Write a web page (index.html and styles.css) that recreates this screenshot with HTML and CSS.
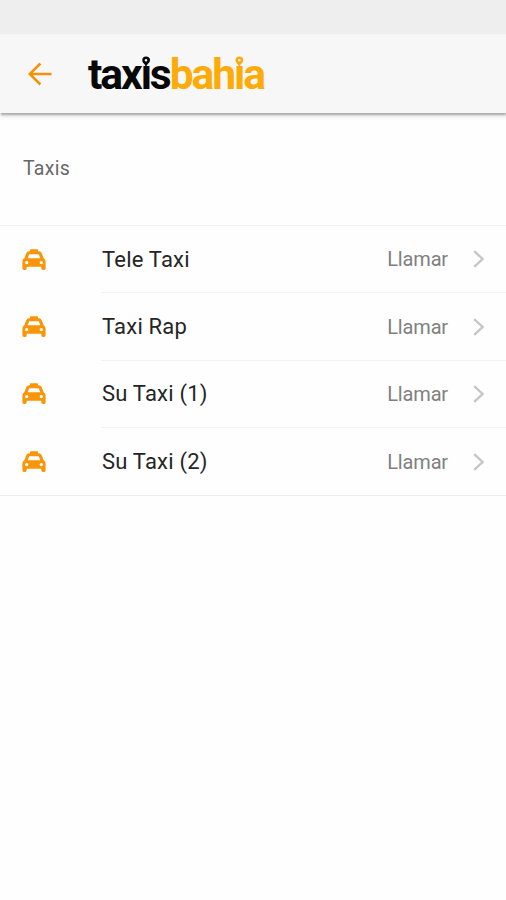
FILE: index.html
```html
<!DOCTYPE html>
<html lang="es">
<head>
<meta charset="utf-8">
<title>Taxis Bahia</title>
<link rel="stylesheet" href="styles.css">
</head>
<body>
<svg class="symbols" width="0" height="0" aria-hidden="true">
  <symbol id="taxi" viewBox="0 0 24 24">
    <path fill-rule="evenodd" d="M8 2Q8 1.3 8.7 1.3H15.3Q16 1.3 16 2V3.3H17Q18.8 3.3 19.6 5L21.7 10.2Q23.6 11.3 23.6 13.4V20.3Q23.6 21.9 22 21.9H20.9Q19.3 21.9 19.3 20.3V18.8H4.7V20.3Q4.7 21.9 3.1 21.9H2Q.4 21.9 .4 20.3V13.4Q.4 11.3 2.3 10.2L4.4 5Q5.2 3.3 7 3.3H8ZM7.2 6.3 5.7 10.3H18.3L16.8 6.3ZM4.7 12.9A1.7 1.7 0 1 0 4.7 16.3A1.7 1.7 0 1 0 4.7 12.9ZM19.3 12.9A1.7 1.7 0 1 0 19.3 16.3A1.7 1.7 0 1 0 19.3 12.9Z"/>
  </symbol>
  <symbol id="chevron" viewBox="0 0 12 18"><path d="M1.2 1.2 9.6 9 1.2 16.8"/></symbol>
</svg>
<div class="statusbar"></div>
<header class="toolbar">
  <svg class="back" viewBox="0 0 24 24"><path d="M23.5 12H2M12.4 1.5 1.8 12 12.4 22.5"/></svg>
  <svg class="logo" viewBox="0 0 180 42">
    <text x="0" y="36" textLength="178" lengthAdjust="spacing">taxis<tspan class="accent">bahia</tspan></text>
    <g class="pin"><path d="M54.8 8 58 14 61.2 8Z"/><circle cx="58" cy="7.2" r="2.5"/></g>
    <g class="pin accent"><path d="M148.1 8 151.3 14 154.5 8Z"/><circle cx="151.3" cy="7.2" r="2.5"/></g>
  </svg>
</header>
<main>
  <h1 class="heading">Taxis</h1>
  <ul class="list">
    <li class="item"><svg class="taxi"><use href="#taxi"/></svg><div class="row"><span class="name">Tele Taxi</span><span class="call">Llamar</span><svg class="chevron"><use href="#chevron"/></svg></div></li>
    <li class="item"><svg class="taxi"><use href="#taxi"/></svg><div class="row"><span class="name">Taxi Rap</span><span class="call">Llamar</span><svg class="chevron"><use href="#chevron"/></svg></div></li>
    <li class="item"><svg class="taxi"><use href="#taxi"/></svg><div class="row"><span class="name">Su Taxi (1)</span><span class="call">Llamar</span><svg class="chevron"><use href="#chevron"/></svg></div></li>
    <li class="item"><svg class="taxi"><use href="#taxi"/></svg><div class="row"><span class="name">Su Taxi (2)</span><span class="call">Llamar</span><svg class="chevron"><use href="#chevron"/></svg></div></li>
  </ul>
</main>
</body>
</html>
```
FILE: styles.css
```css
* { box-sizing: border-box; }
body { margin: 0; min-height: 900px; background: #fefefe; font-family: Roboto, "Liberation Sans", sans-serif; }
.symbols { display: block; }
.statusbar { height: 34px; background: #eee; }
.toolbar { display: flex; align-items: center; height: 79px; padding-left: 28px; background: #f7f7f7; box-shadow: 0 2px 2px -0.5px #aaa, 0 4px 4px #ebebeb; }
.back { width: 24px; height: 24px; fill: none; stroke: #f39207; stroke-width: 2.5; }
.logo { width: 180px; height: 42px; margin-left: 36px; overflow: visible; font-size: 42.5px; font-weight: 700; fill: #080808; }
.accent { fill: #fdab08; }
.pin circle { fill: #f7f7f7; stroke: #080808; stroke-width: 2.4; }
.pin.accent circle { stroke: #fdab08; }
.heading { height: 112px; margin: 0; padding: 44px 0 0 23px; color: #686868; font-size: 19.5px; line-height: 24px; font-weight: 400; letter-spacing: .3px; }
.list { margin: 0; padding: 0; list-style: none; border-top: 1px solid #f0f0f0; border-bottom: 1px solid #eee; }
.item { display: flex; align-items: center; height: 67.4px; padding-left: 22px; }
.item:last-child { height: 67px; }
.taxi { width: 24px; height: 24px; fill: #f99508; }
.row { display: flex; flex: 1; align-items: center; height: 100%; margin-left: 55px; padding: 0 21px 0 1px; border-bottom: 1px solid #f2f2f2; }
.item:last-child .row { border-bottom: 0; }
.name { flex: 1; color: #252525; font-size: 22px; letter-spacing: .2px; }
.call { color: #808080; font-size: 20px; letter-spacing: -.15px; }
.chevron { width: 12px; height: 18px; margin-left: 25px; fill: none; stroke: #c5c5c5; stroke-width: 2.3; }
```
